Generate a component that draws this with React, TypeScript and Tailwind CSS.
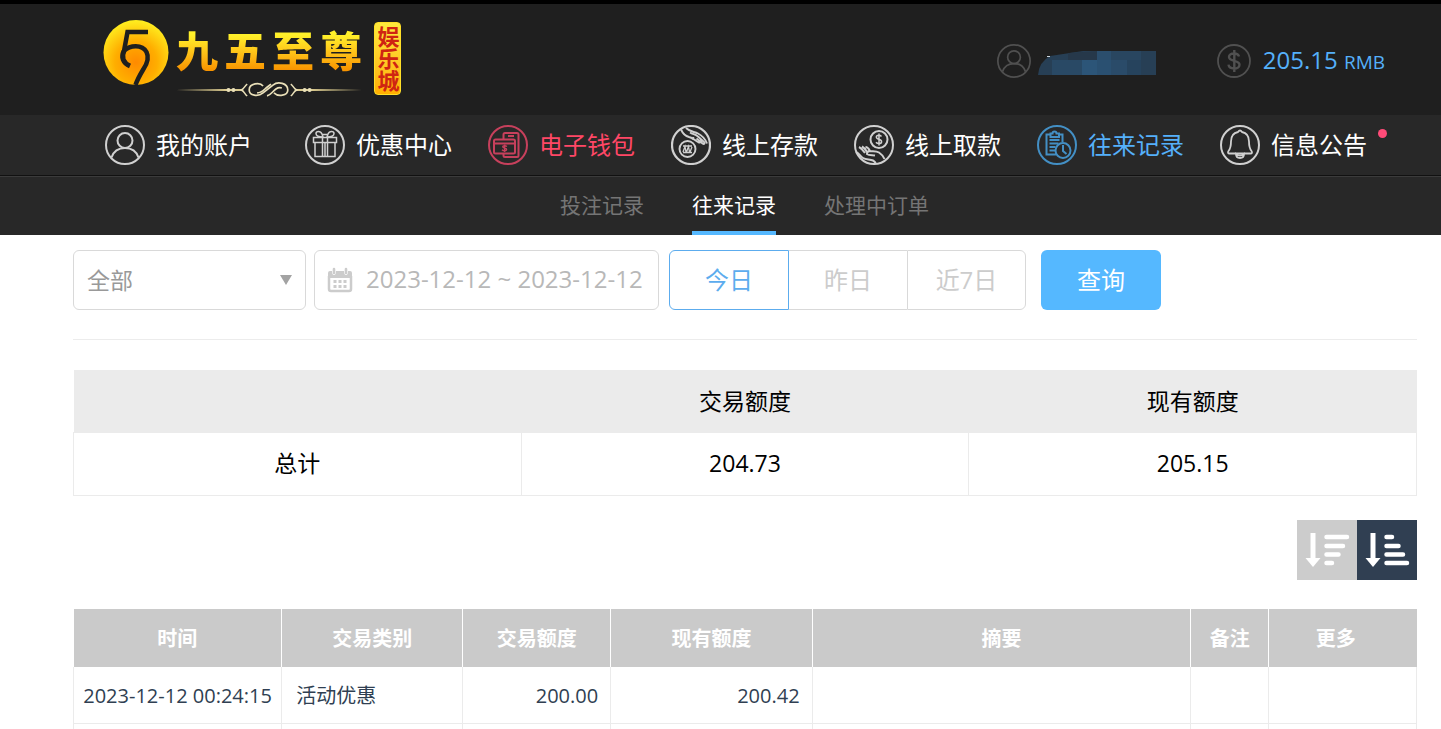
import React from 'react';

interface IconProps {
  className?: string;
}

const UserIcon: React.FC<IconProps> = ({ className }) => (
  <svg viewBox="0 0 40 40" className={className} fill="none" stroke="currentColor" strokeWidth="2">
    <circle cx="20" cy="20" r="19" />
    <circle cx="20" cy="15.5" r="7.5" />
    <path d="M6.5 32.5C8.5 26.5 13.5 23 20 23s11.5 3.5 13.5 9.5" />
  </svg>
);

const DollarIcon: React.FC<IconProps> = ({ className }) => (
  <svg viewBox="0 0 34 34" className={className} fill="none" stroke="currentColor">
    <circle cx="17" cy="17" r="16" strokeWidth="1.8" />
    <path d="M22 12.5C21.5 10.5 19.5 9.5 17 9.5c-3 0-5 1.400-5 3.600 0 5 10.500 2.600 10.500 7.600 0 2.300-2.300 3.800-5.300 3.800-3.200 0-5.400-1.400-5.700-3.800M17.300 6v22" strokeWidth="2.4" />
  </svg>
);

const GiftIcon: React.FC<IconProps> = ({ className }) => (
  <svg viewBox="0 0 40 40" className={className} fill="none" stroke="currentColor" strokeWidth="1.5">
    <circle cx="20" cy="20" r="19" strokeWidth="2" />
    <path d="M8.5 12.5h23v5h-23zM10 17.5h20v14H10zM17.5 12.5v19M22.5 12.5v19M20 17.5v14" />
    <path d="M18 12c-3.5 0-7-1-7-3.5S15.5 5.5 17 9l1 3zM22 12c3.5 0 7-1 7-3.5S24.5 5.5 23 9l-1 3zM17.5 9.5h5" />
  </svg>
);

const WalletIcon: React.FC<IconProps> = ({ className }) => (
  <svg viewBox="0 0 40 40" className={className} fill="none" stroke="currentColor" strokeWidth="2">
    <circle cx="20" cy="20" r="19" />
    <path d="M15.5 14V9.500q0-1.500 1.500-1.500h12q1.500 0 1.500 1.500v21q0 1.500-1.500 1.500H17q-1.500 0-1.500-1.500V29" />
    <path d="M20 11h6" />
    <rect x="6" y="14.5" width="21" height="14" rx="1.5" />
    <path d="M6 18.5h21" />
    <path d="M19 21.5q-1-.8-2.500-.8c-2.500.2-2.200 2 0 2.300 2.800.4 2.800 2.600 0 2.800q-1.500 0-2.500-1M16.700 19.500v7.500" strokeWidth="1.4" />
  </svg>
);

const DepositIcon: React.FC<IconProps> = ({ className }) => (
  <svg viewBox="0 0 40 40" className={className} fill="none" stroke="currentColor" strokeWidth="1.9">
    <circle cx="20" cy="20" r="19" strokeWidth="2.2" />
    <path d="M10 4.5c2 4.500 4 6.500 8 7.500 4 .8 6 3.500 9 5 3 1.200 5-.5 2-2.500" />
    <path d="M15 3c4 4 8 3.500 12 5.500s7 5 9 10" />
    <path d="M19 7.5c3 2 5 1.500 8 4l6 5.500c1.500 1.500 0 2.500-1.500 1.500L25.500 13.500M22.500 12l-1 2.500" />
    <circle cx="16.5" cy="24" r="8" />
    <path d="M12 27l2-5.500 1 5.500M15.500 27l2-5.500 1 5.500M19 27l2-5M12 21h9M12 27.500h9" strokeWidth="1.3" />
  </svg>
);

const WithdrawIcon: React.FC<IconProps> = ({ className }) => (
  <svg viewBox="0 0 40 40" className={className} fill="none" stroke="currentColor" strokeWidth="2">
    <circle cx="20" cy="20" r="19" strokeWidth="2" />
    <circle cx="25" cy="14.5" r="8.5" />
    <path d="M27.5 11.5q-1-1.200-2.700-1.200c-3.300.2-3.200 3.300 0 4 3.800.8 3.500 4.300.2 4.300q-2 0-3-1.400M25 8.500v12" strokeWidth="1.5" />
    <path d="M2 27c3 1 4 4 7 6s7 1 10 2.500c2 1 2.500 2 3 3.500M5 22c2 1 4 3 6 6M8 21.500c2 1 3.500 3 5 5.500M11.500 22c2 0 3.500 2 4.500 4 3 .5 6-.5 9 1.500s4.500 4 5.500 6.500M16 26c-2 0-3 1-3 3 2 1.500 5 1 8 1.500" />
  </svg>
);

const RecordIcon: React.FC<IconProps> = ({ className }) => (
  <svg viewBox="0 0 40 40" className={className} fill="none" stroke="currentColor" strokeWidth="2">
    <circle cx="20" cy="20" r="19" strokeWidth="2" />
    <path d="M19 29.5H9.5V9.5H14M21 9.5h4.500V17" />
    <path d="M13.5 8.5h2a2 2 0 0 1 4 0h2.500v3.500h-8.500z" />
    <path d="M12.5 15h10M12.5 18.500h9M12.500 22h6M12.500 25.500h6" />
    <circle cx="26" cy="25.5" r="7.5" />
    <path d="M26 20v6l3.500 3" />
  </svg>
);

const BellIcon: React.FC<IconProps> = ({ className }) => (
  <svg viewBox="0 0 40 40" className={className} fill="none" stroke="currentColor" strokeWidth="1.8">
    <circle cx="20" cy="20" r="19" strokeWidth="2" />
    <path d="M18 7q2-3 4 0c5 1 7 4.500 7 9.500 0 5 .5 7 2.500 9.500 1 1.500.5 2.500-1 2.500h-21c-1.500 0-2-1-1-2.500C10.500 23.500 11 21.500 11 16.500c0-5 2-8.500 7-9.500z" />
    <path d="M16 29q0 4 4 4t4-4q-4 3-8 0z" />
  </svg>
);

const CalendarIcon: React.FC<IconProps> = ({ className }) => (
  <svg viewBox="0 0 26 26" className={className} fill="none" stroke="currentColor">
    <path d="M2 9v13q0 2 2 2h18q2 0 2-2V9" strokeWidth="2.5" />
    <path d="M1 11V6q0-2 2-2h2q0 4 2 4t2-4h8q0 4 2 4t2-4h2q2 0 2 2v5z" fill="currentColor" stroke="none" />
    <path d="M7 2v4M19 2v4" strokeWidth="2.6" strokeLinecap="round" />
    <path d="M6.500 14.500h13M6.500 19.500h13" strokeWidth="3" strokeDasharray="3 2" />
  </svg>
);

const Logo = () => (
  <a href="#" className="flex items-start">
    <svg viewBox="0 0 66 66" className="size-[66px]" fill="none">
      <defs>
        <radialGradient id="coin" cx="0.5" cy="0.65" r="0.65">
          <stop offset="0" stopColor="#ff8a00" />
          <stop offset="0.5" stopColor="#ffae00" />
          <stop offset="1" stopColor="#ffef20" />
        </radialGradient>
      </defs>
      <circle cx="33" cy="32.5" r="32.5" fill="url(#coin)" />
      <path d="M45 12H24.500L21 31C27 25 39 24 43.500 32c3 6 1 11-3 17-3 5-6 10-8 16" stroke="#1f1f1f" strokeWidth="4.5" />
      <path d="M21 31c-3 6-1 12 6 15" stroke="#1f1f1f" strokeWidth="5" />
    </svg>
    <div className="ml-[7px] flex w-[186px] flex-col">
      <div className="mt-1 flex justify-between text-[42px] leading-[54px] font-black">
        {['九', '五', '至', '尊'].map((char) => (
          <span key={char} className="bg-gradient-to-b from-[#fff12a] from-20% to-[#f89400] to-85% bg-clip-text text-transparent">
            {char}
          </span>
        ))}
      </div>
      <svg viewBox="0 0 188 20" className="h-5 w-full" fill="none" stroke="#e9dfb8">
        <path d="M0 12l50-1h18v2H50zM188 12l-50-1h-18v2h18z" fill="#d9c98e" stroke="none" />
        <path d="M53 12h.1M58 12h.1M130 12h.1M135 12h.1" strokeWidth="4" strokeLinecap="round" />
        <path d="M72 6c-3 2-2 4-6 6 4 2 3 4 6 6M116 6c3 2 2 4 6 6-4 2-3 4-6 6" strokeWidth="1.5" />
        <path d="M88 8c-3-4-14-3-14 4 0 6 9 7 14 3l10-8c5-4 15-2 15 5 0 6-10 7-14 3M82 15c4 0 6-2 9-5l5-4M92 18c4-1 5-4 9-7q3-2 6-1" strokeWidth="1.7" />
      </svg>
    </div>
    <div className="mt-0.5 ml-3 flex h-[73px] w-[27px] items-center justify-center rounded-[4px] border border-[#ffdf28] bg-gradient-to-b from-[#ffe93c] to-[#ffae00]">
      <span className="text-[22px] leading-6 font-bold text-[#cf2412] [writing-mode:vertical-rl]">娱乐城</span>
    </div>
  </a>
);

const MaskedName = () => (
  <svg viewBox="0 0 118 26" className="h-[26px] w-[118px]">
    <path d="M0 25Q1 12 12 6L45 1H118V25Z" fill="#273f55" />
    <path d="M14 10h30v15H14z" fill="#294965" />
    <path d="M44 10h15v15H44z" fill="#2c5578" />
    <path d="M59 1h14v9H59z" fill="#2b4e6d" />
    <path d="M59 10h14v15H59z" fill="#2a5071" />
    <path d="M73 1h30v9H73z" fill="#294660" />
    <path d="M73 10h16v15H73z" fill="#2a4b69" />
    <path d="M89 10h14v15H89z" fill="#26435d" />
    <path d="M30 3l29-2v9H30z" fill="#26384a" />
    <path d="M9 6h3v1H9z" fill="#cfd8df" />
  </svg>
);

const navItems = [
  { label: '我的账户', icon: UserIcon, style: 'text-white mr-[17px]', iconStyle: 'text-[#d0d0d0]' },
  { label: '优惠中心', icon: GiftIcon, style: 'text-white', iconStyle: 'text-[#d0d0d0]' },
  { label: '电子钱包', icon: WalletIcon, style: 'text-[#ff4766]', iconStyle: 'text-[#c7405c]' },
  { label: '线上存款', icon: DepositIcon, style: 'text-white', iconStyle: 'text-[#d0d0d0]' },
  { label: '线上取款', icon: WithdrawIcon, style: 'text-white', iconStyle: 'text-[#d0d0d0]' },
  { label: '往来记录', icon: RecordIcon, style: 'text-[#55b0fa]', iconStyle: 'text-[#438fc4]' },
  { label: '信息公告', icon: BellIcon, style: 'text-white', iconStyle: 'text-[#d0d0d0]', badge: true },
];

const subTabs = ['投注记录', '往来记录', '处理中订单'];

const columns = [
  { label: '时间', style: 'w-[15.5%]' },
  { label: '交易类别', style: 'w-[13.5%]' },
  { label: '交易额度', style: 'w-[11%]' },
  { label: '现有额度', style: 'w-[15%]' },
  { label: '摘要', style: 'w-[28.2%]' },
  { label: '备注', style: 'w-[5.8%]' },
  { label: '更多', style: 'w-[11%] pr-3.5' },
];

const rows = [
  ['2023-12-12 00:24:15', '活动优惠', '200.00', '200.42', '', '', ''],
  ['', '', '', '', '', '', ''],
];

const cellAlign = ['text-center', 'pl-3.5 text-left', 'pr-3 text-right', 'pr-3 text-right', '', '', ''];

const Header = () => (
  <header className="border-t-4 border-black bg-[#1f1f1f]">
    <div className="flex h-[111px] items-start justify-between pt-4 pr-14 pl-[103px]">
      <Logo />
      <div className="mt-[23px] flex items-center">
        <UserIcon className="size-[34px] text-[#505050]" />
        <div className="mt-1 ml-[7px]">
          <MaskedName />
        </div>
        <DollarIcon className="ml-[61px] size-[34px] text-[#505050]" />
        <p className="ml-3 text-2xl leading-[34px] text-[#55b0fa]">
          205.15 <span className="text-[19px]">RMB</span>
        </p>
      </div>
    </div>
    <nav className="flex h-[61px] items-center gap-9 border-b border-[#111111] bg-[#282828] pl-[105px]">
      {navItems.map(({ label, icon: Icon, style, iconStyle, badge }) => (
        <a key={label} href="#" className={`relative flex shrink-0 items-center gap-[11px] text-2xl leading-10 ${style}`}>
          <Icon className={`size-10 ${iconStyle}`} />
          <span>{label}</span>
          {badge && <i className="absolute top-1 -right-5 size-[9px] rounded-full bg-[#ff4b78]" />}
        </a>
      ))}
    </nav>
    <nav className="flex h-[59px] justify-center gap-12 border-t border-[#3b3b3b] bg-[#282828] pl-12 text-[21px]">
      {subTabs.map((tab) => (
        <a
          key={tab}
          href="#"
          className={`flex items-center border-b-4 pt-1 ${
            tab === '往来记录' ? 'border-[#55b8ff] text-white' : 'border-transparent text-[#757575]'
          }`}
        >
          {tab}
        </a>
      ))}
    </nav>
  </header>
);

const Filters = () => (
  <form className="flex h-[90px] items-start border-b border-[#ececec]">
    <label className="flex h-[60px] w-[233px] items-center rounded-md border border-[#d9d9d9] px-[13px] text-[#999999]">
      <select aria-label="类别" className="h-full flex-1 appearance-none bg-transparent text-[23px] outline-none">
        <option>全部</option>
      </select>
      <svg viewBox="0 0 12 10" className="h-2.5 w-3" fill="#a3a3a3">
        <path d="M0 0h12L6 10z" />
      </svg>
    </label>
    <label className="ml-2 flex h-[60px] w-[345px] items-center rounded-md border border-[#d9d9d9] pl-3 text-[#cccccc]">
      <CalendarIcon className="size-[26px] shrink-0" />
      <input
        aria-label="日期"
        defaultValue="2023-12-12 ~ 2023-12-12"
        className="ml-[13px] h-full min-w-0 flex-1 bg-transparent pb-[3px] text-2xl text-[#b8b8b8] outline-none"
      />
    </label>
    <div className="ml-2.5 flex h-[60px] text-2xl text-[#cccccc]">
      <button type="button" className="w-[120px] rounded-l-md border border-[#5cacee] text-[#5cacee]">
        今日
      </button>
      <button type="button" className="w-[118px] border-y border-[#d9d9d9]">
        昨日
      </button>
      <button type="button" className="w-[119px] rounded-r-md border border-[#d9d9d9]">
        近7日
      </button>
    </div>
    <button type="button" className="ml-[15px] h-[60px] w-[120px] rounded-md bg-[#55b8ff] text-2xl text-white">
      查询
    </button>
  </form>
);

const Summary = () => (
  <table className="mt-[30px] w-full table-fixed border-collapse text-center text-[23px] text-black">
    <thead>
      <tr className="h-[62px] bg-[#ebebeb]">
        <th aria-label="项目" />
        <th className="font-normal">交易额度</th>
        <th className="font-normal">现有额度</th>
      </tr>
    </thead>
    <tbody>
      <tr className="h-[63px]">
        <td className="border border-[#ebebeb]">总计</td>
        <td className="border border-[#ebebeb]">204.73</td>
        <td className="border border-[#ebebeb]">205.15</td>
      </tr>
    </tbody>
  </table>
);

const SortButtons = () => (
  <div className="mt-6 flex justify-end">
    <button type="button" aria-label="降序" className="size-[60px] bg-[#cccccc]">
      <svg viewBox="0 0 60 60" className="size-full" fill="none" stroke="white">
        <path d="M16 13v27" strokeWidth="5" />
        <path d="M8.5 38h15L16 47z" fill="white" stroke="none" />
        <path d="M29.5 17H50M29.5 26H46M29.5 34.5H41.5M29.5 43H35" strokeWidth="4.5" strokeLinecap="round" />
      </svg>
    </button>
    <button type="button" aria-label="升序" className="size-[60px] bg-[#303f52]">
      <svg viewBox="0 0 60 60" className="size-full" fill="none" stroke="white">
        <path d="M16 13v27" strokeWidth="5" />
        <path d="M8.5 38h15L16 47z" fill="white" stroke="none" />
        <path d="M29.5 17H35M29.5 26H41.5M29.5 34.5H46M29.5 43H50" strokeWidth="4.5" strokeLinecap="round" />
      </svg>
    </button>
  </div>
);

const Transactions = () => (
  <table className="mt-[29px] w-full table-fixed border-collapse text-xl text-[#303f52]">
    <thead>
      <tr className="h-[58px] bg-[#cacaca] text-white">
        {columns.map(({ label, style }) => (
          <th key={label} className={`border-r border-white pt-0.5 font-bold last:border-r-0 ${style}`}>
            {label}
          </th>
        ))}
      </tr>
    </thead>
    <tbody>
      {rows.map((row, index) => (
        <tr key={index} className="h-[57px]">
          {row.map((cell, col) => (
            <td key={col} className={`border border-t-0 border-[#ebebeb] pt-0.5 whitespace-nowrap ${cellAlign[col]}`}>
              {cell}
            </td>
          ))}
        </tr>
      ))}
    </tbody>
  </table>
);

const App = () => {
  return (
    <div className="h-screen overflow-hidden bg-white font-['Open_Sans','Noto_Sans_CJK_SC',sans-serif]">
      <Header />
      <main className="pt-[15px] pr-6 pl-[73px]">
        <Filters />
        <Summary />
        <SortButtons />
        <Transactions />
      </main>
    </div>
  );
};

export default App;
